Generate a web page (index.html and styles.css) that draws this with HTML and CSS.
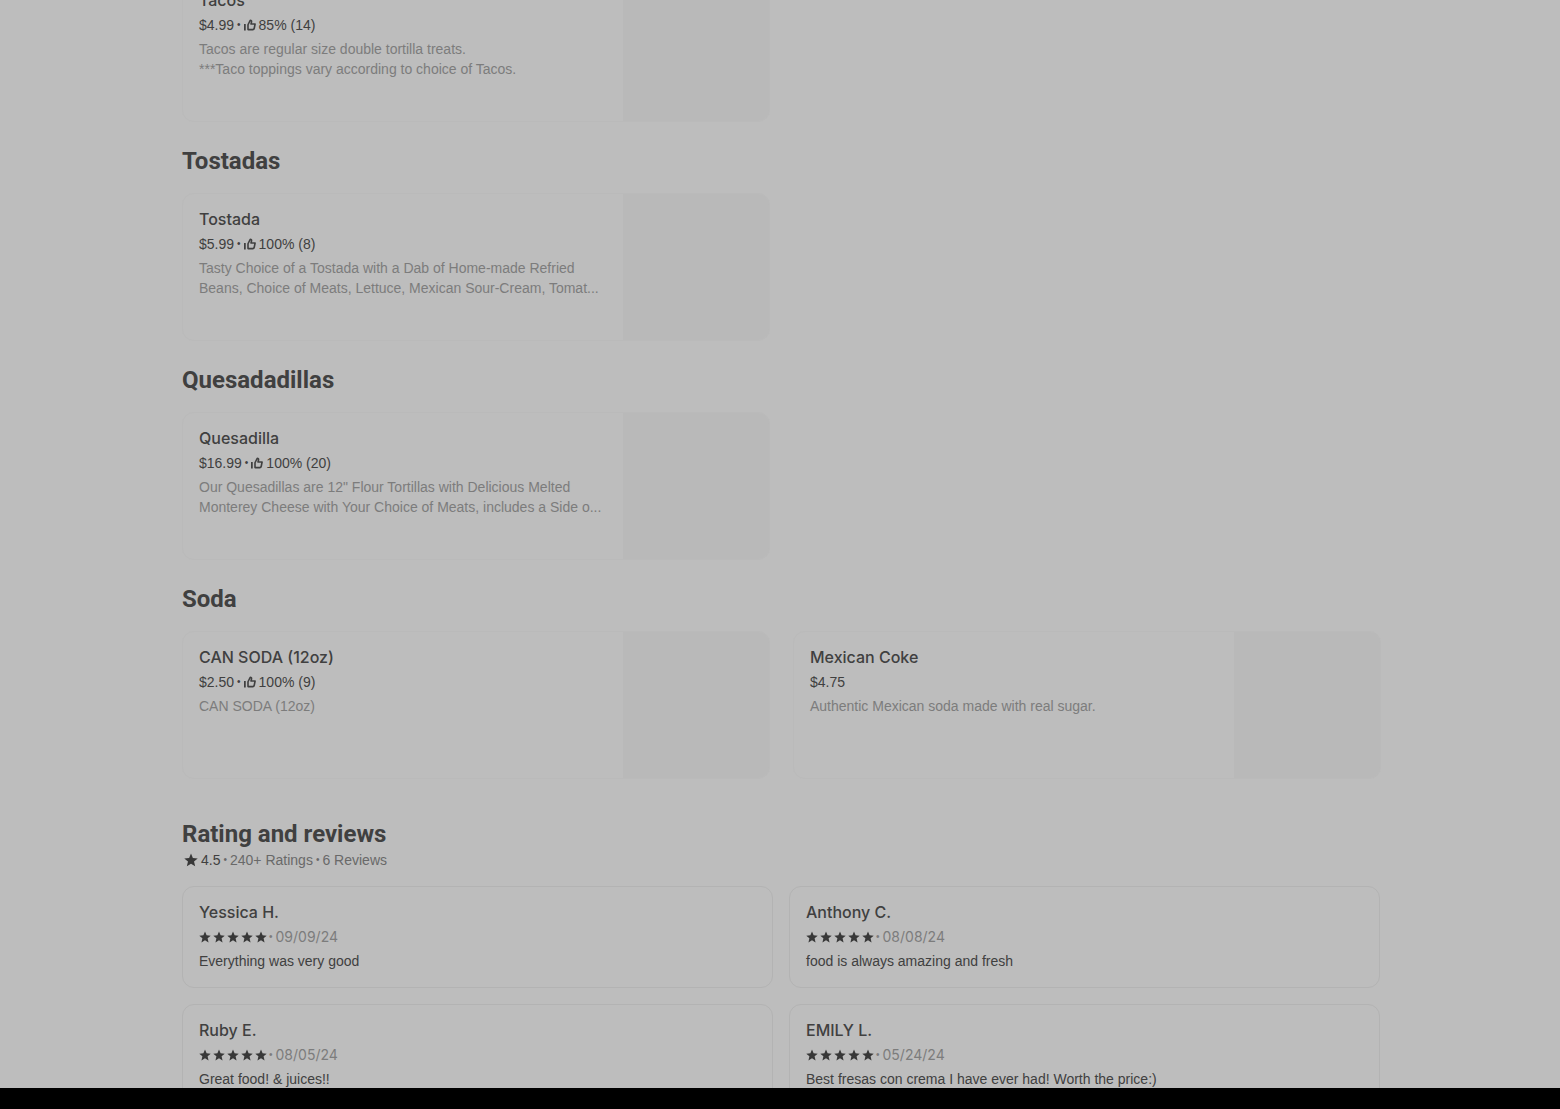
FILE: index.html
```html
<!DOCTYPE html>
<html lang="en">
<head>
<meta charset="utf-8">
<meta name="viewport" content="width=device-width, initial-scale=1">
<title>Menu</title>
<link rel="stylesheet" href="styles.css">
</head>
<body>
<svg class="sprite" aria-hidden="true">
  <symbol id="thumb" viewBox="0 0 24 24">
    <path fill="currentColor" d="M0 10h3.500v13H0z"/>
    <path fill="none" stroke="currentColor" stroke-width="3.200" stroke-linejoin="round" d="M8 21.200v-9.700l4.500-9c2 0 3 1.500 2.500 3.500l-1 4h8.200l-1.700 8.500q-.5 2.700-3 2.700z"/>
  </symbol>
  <symbol id="star" viewBox="0 0 24 24">
    <path fill="currentColor" d="M12 1l3.200 7.600 8.300.7-6.300 5.400 1.900 8.100L12 18.500l-7.100 4.300 1.900-8.100L.5 9.300l8.300-.7z"/>
  </symbol>
</svg>
<main class="page">
  <div class="content">
    <section class="menu-section">
      <h2 class="heading">Tacos</h2>
      <div class="menu-grid">
        <a class="item" href="#tacos">
          <div class="item-text">
            <h3 class="name">Tacos</h3>
            <p class="meta">$4.99 <span class="dot">•</span><svg class="thumb"><use href="#thumb"/></svg>85% (14)</p>
            <p class="desc">Tacos are regular size double tortilla treats.<br>***Taco toppings vary according to choice of Tacos.</p>
          </div>
          <div class="photo"></div>
        </a>
      </div>
    </section>
    <section class="menu-section">
      <h2 class="heading">Tostadas</h2>
      <div class="menu-grid">
        <a class="item" href="#tostada">
          <div class="item-text">
            <h3 class="name">Tostada</h3>
            <p class="meta">$5.99 <span class="dot">•</span><svg class="thumb"><use href="#thumb"/></svg>100% (8)</p>
            <p class="desc">Tasty Choice of a Tostada with a Dab of Home-made Refried<br>Beans, Choice of Meats, Lettuce, Mexican Sour-Cream, Tomat...</p>
          </div>
          <div class="photo"></div>
        </a>
      </div>
    </section>
    <section class="menu-section">
      <h2 class="heading">Quesadadillas</h2>
      <div class="menu-grid">
        <a class="item" href="#quesadilla">
          <div class="item-text">
            <h3 class="name">Quesadilla</h3>
            <p class="meta">$16.99 <span class="dot">•</span><svg class="thumb"><use href="#thumb"/></svg>100% (20)</p>
            <p class="desc">Our Quesadillas are 12" Flour Tortillas with Delicious Melted<br>Monterey Cheese with Your Choice of Meats, includes a Side o...</p>
          </div>
          <div class="photo"></div>
        </a>
      </div>
    </section>
    <section class="menu-section">
      <h2 class="heading">Soda</h2>
      <div class="menu-grid">
        <a class="item" href="#can-soda">
          <div class="item-text">
            <h3 class="name">CAN SODA (12oz)</h3>
            <p class="meta">$2.50 <span class="dot">•</span><svg class="thumb"><use href="#thumb"/></svg>100% (9)</p>
            <p class="desc">CAN SODA (12oz)</p>
          </div>
          <div class="photo"></div>
        </a>
        <a class="item" href="#mexican-coke">
          <div class="item-text">
            <h3 class="name">Mexican Coke</h3>
            <p class="meta">$4.75</p>
            <p class="desc">Authentic Mexican soda made with real sugar.</p>
          </div>
          <div class="photo"></div>
        </a>
      </div>
    </section>
    <section class="reviews">
      <h2 class="heading reviews-heading">Rating and reviews</h2>
      <p class="summary"><svg class="summary-star"><use href="#star"/></svg><strong class="score">4.5</strong> <span class="dot">•</span> 240+ Ratings <span class="dot">•</span> 6 Reviews</p>
      <div class="review-grid">
        <article class="review">
          <h3 class="name">Yessica H.</h3>
          <p class="meta date"><svg class="star"><use href="#star"/></svg><svg class="star"><use href="#star"/></svg><svg class="star"><use href="#star"/></svg><svg class="star"><use href="#star"/></svg><svg class="star"><use href="#star"/></svg><span class="dot">•</span> 09/09/24</p>
          <p class="comment">Everything was very good</p>
        </article>
        <article class="review">
          <h3 class="name">Anthony C.</h3>
          <p class="meta date"><svg class="star"><use href="#star"/></svg><svg class="star"><use href="#star"/></svg><svg class="star"><use href="#star"/></svg><svg class="star"><use href="#star"/></svg><svg class="star"><use href="#star"/></svg><span class="dot">•</span> 08/08/24</p>
          <p class="comment">food is always amazing and fresh</p>
        </article>
        <article class="review">
          <h3 class="name">Ruby E.</h3>
          <p class="meta date"><svg class="star"><use href="#star"/></svg><svg class="star"><use href="#star"/></svg><svg class="star"><use href="#star"/></svg><svg class="star"><use href="#star"/></svg><svg class="star"><use href="#star"/></svg><span class="dot">•</span> 08/05/24</p>
          <p class="comment">Great food! &amp; juices!!</p>
        </article>
        <article class="review">
          <h3 class="name">EMILY L.</h3>
          <p class="meta date"><svg class="star"><use href="#star"/></svg><svg class="star"><use href="#star"/></svg><svg class="star"><use href="#star"/></svg><svg class="star"><use href="#star"/></svg><svg class="star"><use href="#star"/></svg><span class="dot">•</span> 05/24/24</p>
          <p class="comment">Best fresas con crema I have ever had! Worth the price:)</p>
        </article>
      </div>
    </section>
  </div>
</main>
<footer class="bottom-bar"></footer>
</body>
</html>
```
FILE: styles.css
```css
* { box-sizing: border-box; }

body {
  margin: 0;
  height: 100vh;
  display: flex;
  flex-direction: column;
  background: #bdbdbd;
  color: #404040;
  font-family: "Liberation Sans", Arial, sans-serif;
  font-size: 14px;
  line-height: 20px;
}

h2, h3, p { margin: 0; }

.sprite { display: none; }

.page {
  flex: 1;
  min-height: 0;
  overflow: hidden;
}

/* The list is scrolled so that its first heading is above the fold. */
.content {
  margin-top: -74px;
  padding: 0 179px 0 182px;
}

.bottom-bar {
  height: 21px;
  background: #000;
}

.menu-section { margin-bottom: 23px; }

.heading {
  margin-bottom: 16px;
  font-family: Roboto, sans-serif;
  font-size: 24px;
  font-weight: 700;
  line-height: 32px;
}

.menu-grid {
  display: grid;
  grid-template-columns: 1fr 1fr;
  gap: 23px;
}

.item {
  display: flex;
  height: 148px;
  overflow: hidden;
  border: 1px solid #bababa;
  border-radius: 12px;
  color: inherit;
  text-decoration: none;
}

.item-text {
  flex: 1;
  min-width: 0;
  padding: 14px 16px;
  white-space: nowrap;
}

.photo {
  width: 146px;
  background: #b9b9b9;
}

.name {
  margin-bottom: 4px;
  font-family: Inter, sans-serif;
  font-size: 16px;
  font-weight: 500;
  line-height: 22px;
}

.meta {
  display: flex;
  align-items: center;
  gap: 3px;
  margin-bottom: 4px;
}

.dot {
  font-family: "Liberation Sans", Arial, sans-serif;
  font-size: 10px;
}

.desc, .date, .summary { color: #7c7c7c; }

.thumb {
  width: 12px;
  height: 12px;
}

.reviews { padding: 16px 1px 0 0; }

.reviews-heading { margin-bottom: 0; }

.summary {
  display: flex;
  align-items: center;
  gap: 3px;
  margin-bottom: 16px;
  color: #696969;
}

.summary-star {
  width: 14px;
  height: 14px;
  margin-left: 2px;
  color: #383838;
}

.score {
  color: #404040;
  font-weight: 400;
}

.review-grid {
  display: grid;
  grid-template-columns: 1fr 1fr;
  gap: 16px;
}

.review {
  padding: 14px 16px 16px;
  border: 1px solid #b3b3b3;
  border-radius: 12px;
}

.star {
  width: 12px;
  height: 12px;
  margin-right: -1px;
  color: #383838;
}

.date { font-family: Inter, sans-serif; }
```
